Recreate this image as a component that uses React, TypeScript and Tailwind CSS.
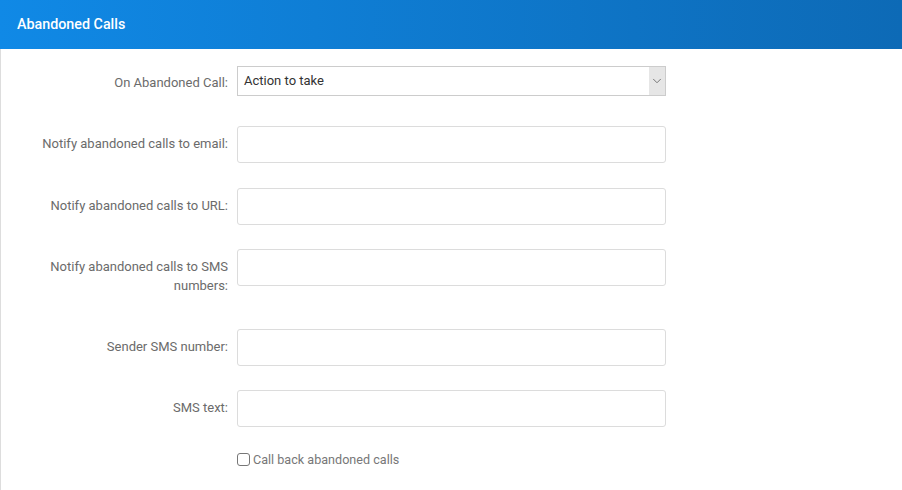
import { ChevronDown } from 'lucide-react'

const fields = [
  { label: 'Notify abandoned calls to email:', mt: 'mt-[30px]' },
  { label: 'Notify abandoned calls to URL:', mt: 'mt-[25px]' },
  { label: 'Notify abandoned calls to SMS numbers:', mt: 'mt-[24px]' },
  { label: 'Sender SMS number:', mt: 'mt-[34px]' },
  { label: 'SMS text:', mt: 'mt-[24px]' }
]

function Row({ label, mt }: { label: string; mt: string }) {
  return (
    <div className={`flex items-start ${mt}`}>
      <label className="w-[227px] shrink-0 pl-[40px] pt-[8px] text-right text-[13px] leading-[19px] text-[#6b6b6b]">
        {label}
      </label>
      <input
        type="text"
        className="ml-[9px] h-[37px] w-[429px] rounded-[3px] border border-[#dcdcdc] bg-white px-2 text-[13px] outline-none"
      />
    </div>
  )
}

export default function App() {
  return (
    <div className="h-[490px] w-[902px] bg-white font-['Roboto',sans-serif]">
      <div className="flex h-[49px] items-center bg-gradient-to-r from-[#1089e6] to-[#0d6ab6] pl-[17px]">
        <h2 className="text-[14.3px] font-medium text-white">Abandoned Calls</h2>
      </div>
      <div className="h-[441px] border-l border-[#dddddd] pt-[17px]">
        <div className="flex items-start">
          <label className="w-[227px] shrink-0 pt-[7px] text-right text-[13px] leading-[19px] text-[#6b6b6b]">
            On Abandoned Call:
          </label>
          <div className="ml-[9px] flex h-[30px] w-[429px] items-stretch border border-[#cccccc] bg-white">
            <span className="flex-1 pl-[6px] text-[13px] leading-[28px] text-[#333]">Action to take</span>
            <span className="flex w-[16px] items-center justify-center bg-[#e6e6e6]">
              <ChevronDown size={14} strokeWidth={1.5} className="text-[#666]" />
            </span>
          </div>
        </div>
        {fields.map((f, idx) => (
          <Row key={idx} label={f.label} mt={f.mt} />
        ))}
        <div className="ml-[236px] mt-[23px] flex items-center">
          <span className="h-[13px] w-[13px] rounded-[3px] border border-[#777] bg-white" />
          <span className="ml-[3px] text-[12.6px] leading-[19px] text-[#777]">Call back abandoned calls</span>
        </div>
      </div>
    </div>
  )
}
